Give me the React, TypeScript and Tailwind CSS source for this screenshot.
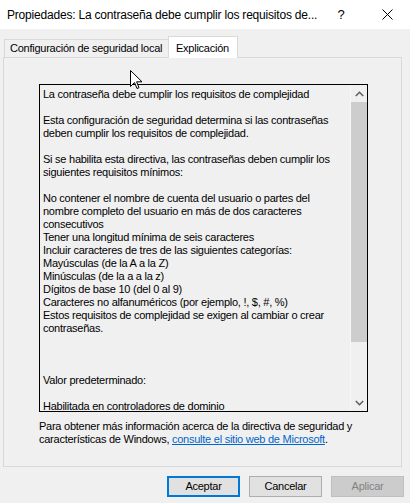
import React from "react";

const lines = [
  "La contraseña debe cumplir los requisitos de complejidad",
  "",
  "Esta configuración de seguridad determina si las contraseñas",
  "deben cumplir los requisitos de complejidad.",
  "",
  "Si se habilita esta directiva, las contraseñas deben cumplir los",
  "siguientes requisitos mínimos:",
  "",
  "No contener el nombre de cuenta del usuario o partes del",
  "nombre completo del usuario en más de dos caracteres",
  "consecutivos",
  "Tener una longitud mínima de seis caracteres",
  "Incluir caracteres de tres de las siguientes categorías:",
  "Mayúsculas (de la A a la Z)",
  "Minúsculas (de la a a la z)",
  "Dígitos de base 10 (del 0 al 9)",
  "Caracteres no alfanuméricos (por ejemplo, !, $, #, %)",
  "Estos requisitos de complejidad se exigen al cambiar o crear",
  "contraseñas.",
  "",
  "",
  "",
  "Valor predeterminado:",
  "",
  "Habilitada en controladores de dominio",
];

export default function App() {
  return (
    <div
      className="relative w-[410px] h-[503px] overflow-hidden bg-[#f0f0f0] text-black"
      style={{ fontFamily: '"Liberation Sans", Arial, sans-serif' }}
    >
      {/* Title bar */}
      <div className="flex h-[29px] items-center bg-white">
        <div className="pl-[7px] text-[12px] tracking-[-0.2px] text-black whitespace-nowrap">
          Propiedades: La contraseña debe cumplir los requisitos de...
        </div>
        <div className="ml-auto flex h-full">
          <div className="flex h-full w-[46px] items-center justify-center text-[13px]">?</div>
          <div className="flex h-full w-[46px] items-center justify-center">
            <svg width="11" height="11" viewBox="0 0 11 11">
              <path d="M0.5 0.5 L10.5 10.5 M10.5 0.5 L0.5 10.5" stroke="#000" strokeWidth="1" />
            </svg>
          </div>
        </div>
      </div>

      {/* Tabs */}
      <div className="mt-[7px] flex items-end pl-[4px] text-[11px] tracking-[-0.25px]">
        <div className="flex h-[18px] w-[164px] items-center border-l border-t border-[#d9d9d9] bg-[#f0f0f0] pl-[5px] whitespace-nowrap">
          Configuración de seguridad local
        </div>
        <div className="relative z-10 mb-[-1px] flex h-[22px] w-[70px] items-start border-l border-r border-t border-[#d9d9d9] bg-white pl-[7px] pt-[3px] whitespace-nowrap">
          Explicación
        </div>
      </div>

      {/* Panel */}
      <div className="ml-[3px] h-[410px] w-[399px] border border-[#d9d9d9] bg-[#f0f0f0] pl-[35px] pt-[26px] text-[11px] tracking-[-0.25px]">
        <div className="flex h-[328px] w-[329px] border border-black">
          <div className="flex-1 overflow-hidden pl-[3px] pt-[3px] leading-[13px]">
            {lines.map((l, i) => (
              <div key={i} className="h-[13px] whitespace-nowrap">
                {l}
              </div>
            ))}
          </div>
          <div className="flex w-[17px] flex-col border-l border-[#f7f7f7] bg-[#f0f0f0]">
            <div className="flex h-[17px] items-center justify-center">
              <svg width="9" height="6" viewBox="0 0 9 6">
                <path d="M0.8 5 L4.5 1.3 L8.2 5" stroke="#606060" strokeWidth="1.6" fill="none" />
              </svg>
            </div>
            <div className="h-[240px] bg-[#cdcdcd]" />
            <div className="flex-1" />
            <div className="flex h-[17px] items-center justify-center">
              <svg width="9" height="6" viewBox="0 0 9 6">
                <path d="M0.8 1 L4.5 4.7 L8.2 1" stroke="#606060" strokeWidth="1.6" fill="none" />
              </svg>
            </div>
          </div>
        </div>
        <div className="mt-[8px] leading-[13px]">
          <div className="whitespace-nowrap">
            Para obtener más información acerca de la directiva de seguridad y
          </div>
          <div className="whitespace-nowrap">
            características de Windows,{" "}
            <span className="text-[#0066cc] underline">consulte el sitio web de Microsoft</span>.
          </div>
        </div>
      </div>

      {/* Buttons */}
      <div className="mt-[9px] flex justify-end gap-[9px] pr-[6px] text-[11px] tracking-[-0.25px]">
        <button className="flex h-[21px] w-[73px] items-center justify-center border-2 border-[#0078d7] bg-[#e1e1e1] text-black">
          Aceptar
        </button>
        <button className="flex h-[21px] w-[73px] items-center justify-center border border-[#adadad] bg-[#e1e1e1] text-black">
          Cancelar
        </button>
        <button className="flex h-[21px] w-[73px] items-center justify-center border border-[#bfbfbf] bg-[#cccccc] text-[#838383]">
          Aplicar
        </button>
      </div>

      {/* Mouse cursor */}
      <svg
        className="absolute left-[130px] top-[70px]"
        width="13"
        height="21"
        viewBox="0 0 13 21"
      >
        <path
          d="M0.5 0.5 L0.5 16.5 L4.5 12.5 L7 18.5 L9 17.7 L6.6 11.8 L12 11.8 Z"
          fill="#fff"
          stroke="#000"
          strokeWidth="1"
          strokeLinejoin="miter"
        />
      </svg>
    </div>
  );
}
